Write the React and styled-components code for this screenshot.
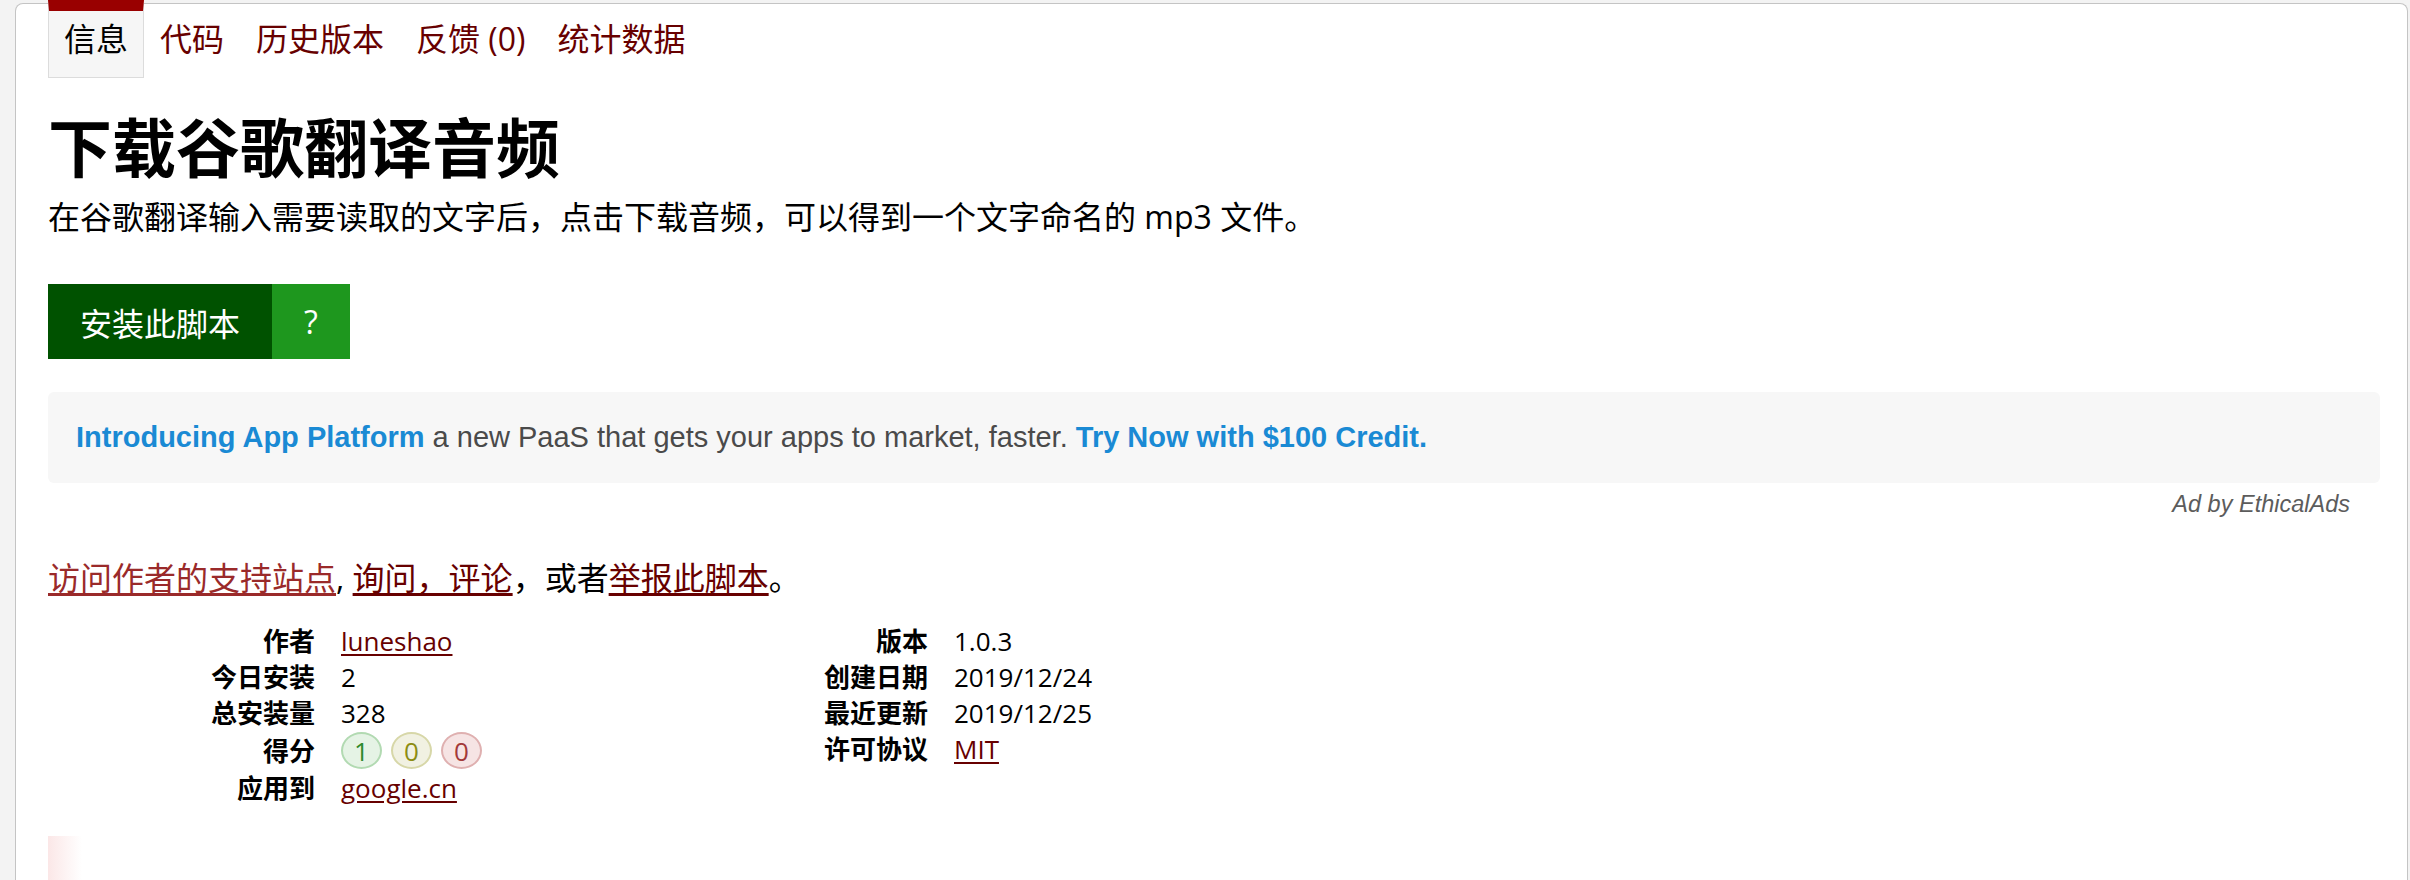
import React from "react";
import styled, { createGlobalStyle } from "styled-components";

const GlobalStyle = createGlobalStyle`
  html, body {
    margin: 0;
    padding: 0;
    background: #f3f3f3;
  }
  body {
    font-family: "Open Sans", "Noto Sans CJK SC", sans-serif;
    color: #000;
  }
`;

const Card = styled.div`
  margin: 3px 2px 0 15px;
  min-height: 900px;
  background: #fff;
  border: 1px solid #c4c4c4;
  border-bottom: none;
  border-radius: 8px 8px 0 0;
  padding: 0 27px 0 32px;
`;

const TabBar = styled.nav`
  display: flex;
  margin-top: -4px;
`;

const Tab = styled.a`
  display: block;
  font-size: 32px;
  line-height: 44px;
  padding: 6px 15px 16px;
  border-top: 11px solid ${(p) => (p.active ? "#990000" : "transparent")};
  border-left: 1px solid ${(p) => (p.active ? "#dcdcdc" : "transparent")};
  border-right: 1px solid ${(p) => (p.active ? "#dcdcdc" : "transparent")};
  border-bottom: 1px solid ${(p) => (p.active ? "#dcdcdc" : "transparent")};
  background: ${(p) => (p.active ? "#f6f6f6" : "transparent")};
  color: ${(p) => (p.active ? "#000" : "#670000")};
  text-decoration: none;
`;

const Title = styled.h2`
  margin: 31px 0 0;
  font-size: 64px;
  line-height: 77px;
  font-weight: 700;
`;

const Description = styled.p`
  margin: 9px 0 0;
  font-size: 32px;
  line-height: 44px;
`;

const InstallArea = styled.div`
  display: flex;
  margin-top: 45px;
`;

const InstallButton = styled.a`
  display: flex;
  align-items: center;
  justify-content: center;
  box-sizing: border-box;
  height: 75px;
  padding: 0 ${(p) => (p.help ? "30px" : "32px")};
  width: ${(p) => (p.help ? "78px" : "auto")};
  background: ${(p) => (p.help ? "#1e971e" : "#005200")};
  color: #fff;
  font-size: 32px;
  text-decoration: none;
`;

const AdBox = styled.div`
  margin-top: 33px;
  background: #f7f7f7;
  border-radius: 6px;
  padding: 0 28px;
  height: 91px;
  display: flex;
  align-items: center;
  font-family: "Liberation Sans", Arial, sans-serif;
  font-size: 29px;
  color: #4a4a4a;
  white-space: pre;
`;

const AdLink = styled.a`
  color: #1a8ad4;
  font-weight: 700;
  text-decoration: none;
`;

const AdCredit = styled.div`
  text-align: right;
  margin: 6px 30px 0 0;
  font-family: "Liberation Sans", Arial, sans-serif;
  font-style: italic;
  font-size: 23.5px;
  line-height: 30px;
  color: #5c5c5c;
`;

const Feedback = styled.p`
  margin: 37px 0 0;
  font-size: 32px;
  line-height: 44px;
`;

const TextLink = styled.a`
  color: ${(p) => (p.light ? "#9a2a2a" : "#670000")};
  text-decoration: underline;
  text-underline-offset: 3px;
`;

const Details = styled.div`
  display: flex;
  align-items: flex-start;
  margin-top: 23px;
`;

const DetailList = styled.dl`
  margin: 0;
  width: 613px;
  display: grid;
  grid-template-columns: 267px auto;
  align-content: start;
  column-gap: 26px;
  align-items: center;
  font-size: 26px;
  line-height: 36px;
`;

const Label = styled.dt`
  text-align: right;
  font-weight: 700;
`;

const Value = styled.dd`
  margin: 0;
  display: flex;
  align-items: center;
  gap: 9px;
`;

const ratingColors = {
  good: { bg: "#e5f3e5", border: "#b2dab2", color: "#2d8a2d" },
  ok: { bg: "#f1f1e2", border: "#d7d7a8", color: "#8d8d12" },
  bad: { bg: "#f6e4e4", border: "#dfb0b0", color: "#a33a3a" },
};

const Rating = styled.span`
  display: inline-flex;
  align-items: center;
  justify-content: center;
  box-sizing: border-box;
  width: 41px;
  height: 37px;
  margin: 1px 0;
  border-radius: 50%;
  font-size: 26px;
  background: ${(p) => ratingColors[p.kind].bg};
  border: 2px solid ${(p) => ratingColors[p.kind].border};
  color: ${(p) => ratingColors[p.kind].color};
`;

const NextSection = styled.div`
  margin-top: 30px;
  width: 34px;
  height: 60px;
  background: linear-gradient(to right, #fbe7e7, #ffffff);
`;

const tabs = ["信息", "代码", "历史版本", "反馈 (0)", "统计数据"];

export default function App() {
  return (
    <>
      <GlobalStyle />
      <Card>
        <TabBar>
          {tabs.map((t, i) => (
            <Tab key={t} active={i === 0}>
              {t}
            </Tab>
          ))}
        </TabBar>

        <Title>下载谷歌翻译音频</Title>
        <Description>
          在谷歌翻译输入需要读取的文字后，点击下载音频，可以得到一个文字命名的 mp3 文件。
        </Description>

        <InstallArea>
          <InstallButton>安装此脚本</InstallButton>
          <InstallButton help>?</InstallButton>
        </InstallArea>

        <AdBox>
          <AdLink>Introducing App Platform</AdLink>
          {" a new PaaS that gets your apps to market, faster. "}
          <AdLink>Try Now with $100 Credit.</AdLink>
        </AdBox>
        <AdCredit>Ad by EthicalAds</AdCredit>

        <Feedback>
          <TextLink light>访问作者的支持站点</TextLink>, <TextLink>询问，评论</TextLink>，或者
          <TextLink>举报此脚本</TextLink>。
        </Feedback>

        <Details>
          <DetailList>
            <Label>作者</Label>
            <Value>
              <TextLink>luneshao</TextLink>
            </Value>
            <Label>今日安装</Label>
            <Value>2</Value>
            <Label>总安装量</Label>
            <Value>328</Value>
            <Label>得分</Label>
            <Value>
              <Rating kind="good">1</Rating>
              <Rating kind="ok">0</Rating>
              <Rating kind="bad">0</Rating>
            </Value>
            <Label>应用到</Label>
            <Value>
              <TextLink>google.cn</TextLink>
            </Value>
          </DetailList>
          <DetailList>
            <Label>版本</Label>
            <Value>1.0.3</Value>
            <Label>创建日期</Label>
            <Value>2019/12/24</Value>
            <Label>最近更新</Label>
            <Value>2019/12/25</Value>
            <Label>许可协议</Label>
            <Value>
              <TextLink>MIT</TextLink>
            </Value>
          </DetailList>
        </Details>

        <NextSection />
      </Card>
    </>
  );
}
